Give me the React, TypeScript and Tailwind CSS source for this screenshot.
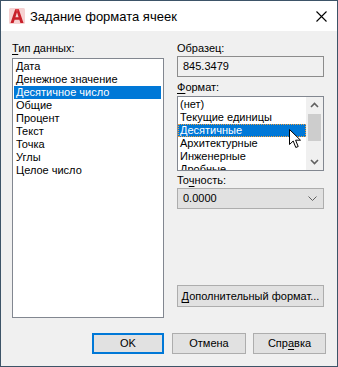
import React from 'react'

const font = { fontFamily: '"Segoe UI", "Liberation Sans", sans-serif' }

const dataTypes = [
  'Дата',
  'Денежное значение',
  'Десятичное число',
  'Общие',
  'Процент',
  'Текст',
  'Точка',
  'Углы',
  'Целое число',
]

const formats = ['(нет)', 'Текущие единицы', 'Десятичные', 'Архитектурные', 'Инженерные', 'Дробные']

const AcadLogo = () => (
  <svg width="16" height="16" viewBox="0 0 16 16">
    <rect x="0" y="0" width="16" height="16" rx="1.5" fill="#f6d2d2" />
    <path d="M1.5 15 L6.2 1.2 H9.8 L14.5 15 H11.4 L10.4 11.8 H5.6 L4.6 15 Z M6.4 9.3 H9.6 L8 4.2 Z" fill="#c8202a" />
    <path d="M6.2 1.2 H9.8 L8 4.2 Z" fill="#e04048" />
  </svg>
)

const Cursor = () => (
  <svg width="13" height="20" viewBox="0 0 13 20">
    <path d="M0.5 0.5 V15.5 L4.2 12 L6.8 18.5 L9.2 17.5 L6.6 11.2 H11.5 Z" fill="#fff" stroke="#000" strokeWidth="1" strokeLinejoin="round" />
  </svg>
)

const Chevron = ({ up }: { up?: boolean }) => (
  <svg width="9" height="6" viewBox="0 0 9 6">
    <path d={up ? 'M1 5 L4.5 1.5 L8 5' : 'M1 1 L4.5 4.5 L8 1'} fill="none" stroke="#606060" strokeWidth="1.6" />
  </svg>
)

export default function App() {
  return (
    <div style={font} className="w-[338px] h-[367px] border border-[#3d5468] bg-[#f0f0f0] flex flex-col text-[11px] text-black relative overflow-hidden">
      {/* Title bar */}
      <div className="h-[30px] bg-white flex items-center pl-[8px] pr-[10px] shrink-0">
        <AcadLogo />
        <span className="ml-[5px] text-[13px] leading-none">Задание формата ячеек</span>
        <div className="ml-auto w-[12px] h-[12px] flex items-center justify-center">
          <svg width="11" height="11" viewBox="0 0 11 11">
            <path d="M0.5 0.5 L10.5 10.5 M10.5 0.5 L0.5 10.5" stroke="#000" strokeWidth="1.1" />
          </svg>
        </div>
      </div>

      {/* Body */}
      <div className="flex pl-[11px] pt-[10px] gap-[13px]">
        {/* Left column */}
        <div className="w-[152px] flex flex-col">
          <div className="h-[17px] leading-[14px]">
            <u className="underline-offset-2">Т</u>ип данных:
          </div>
          <div className="h-[260px] bg-white border border-[#828790] pt-[1px]">
            {dataTypes.map((t, i) => (
              <div
                key={t}
                className={`h-[13px] leading-[13px] pl-[2px] ml-[1px] mr-[2px] whitespace-nowrap ${i === 2 ? 'bg-[#0078d7] text-white' : ''}`}
              >
                {t}
              </div>
            ))}
          </div>
        </div>

        {/* Right column */}
        <div className="w-[147px] flex flex-col">
          <div className="h-[15px] leading-[14px]">Образец:</div>
          <div className="h-[21px] border border-[#8c8c8c] bg-[#f0f0f0] flex items-center pl-[5px]">845.3479</div>

          <div className="h-[14px] leading-[14px] mt-[3px]">
            <u className="underline-offset-2">Ф</u>ормат:
          </div>
          <div className="h-[75px] mt-[2px] bg-white border border-[#828790] flex overflow-hidden relative">
            <div className="flex-1 pt-[1px] overflow-hidden">
              {formats.map((f, i) => (
                <div
                  key={f}
                  className={`h-[13px] leading-[11px] pl-[1px] whitespace-nowrap ${i === 2 ? 'bg-[#0078d7] text-white border border-dotted border-[#f0a040]' : 'border border-transparent'}`}
                >
                  {f}
                </div>
              ))}
            </div>
            <div className="w-[17px] bg-[#f0f0f0] flex flex-col items-center">
              <div className="h-[16px] flex items-center justify-center">
                <Chevron up />
              </div>
              <div className="w-[13px] h-[27px] bg-[#cdcdcd] mt-[1px]" />
              <div className="flex-1" />
              <div className="h-[16px] flex items-center justify-center">
                <Chevron />
              </div>
            </div>
            <div className="absolute left-[111px] top-[32px]">
              <Cursor />
            </div>
          </div>

          <div className="h-[14px] leading-[14px] mt-[2px]">
            То<u className="underline-offset-2">ч</u>ность:
          </div>
          <div className="h-[21px] mt-[1px] border border-[#adadad] bg-[#e1e1e1] flex items-center pl-[5px] pr-[6px]">
            <span>0.0000</span>
            <svg className="ml-auto" width="9" height="5" viewBox="0 0 9 5">
              <path d="M0.5 0.5 L4.5 4.5 L8.5 0.5" fill="none" stroke="#606060" strokeWidth="1" />
            </svg>
          </div>

          <div className="h-[22px] mt-[76px] border border-[#adadad] bg-[#e1e1e1] flex items-center justify-center whitespace-nowrap">
            <span>
              <u className="underline-offset-2">Д</u>ополнительный формат...
            </span>
          </div>
        </div>
      </div>

      {/* Bottom buttons */}
      <div className="flex mt-[15px] pl-[91px] gap-[8px]">
        <div className="w-[72px] h-[21px] border-2 border-[#0078d7] bg-[#e1e1e1] flex items-center justify-center">OK</div>
        <div className="w-[74px] h-[21px] border border-[#adadad] bg-[#e1e1e1] flex items-center justify-center">Отмена</div>
        <div className="w-[73px] h-[21px] border border-[#adadad] bg-[#e1e1e1] flex items-center justify-center ml-[-1px]">
          <span>
            Спр<u className="underline-offset-2">а</u>вка
          </span>
        </div>
      </div>
    </div>
  )
}
